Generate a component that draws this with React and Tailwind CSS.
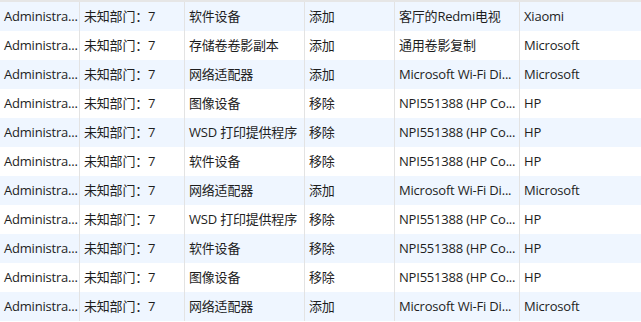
import React from 'react';

const rows = [
  ['Administra...', '未知部门：7', '软件设备', '添加', '客厅的Redmi电视', 'Xiaomi'],
  ['Administra...', '未知部门：7', '存储卷卷影副本', '添加', '通用卷影复制', 'Microsoft'],
  ['Administra...', '未知部门：7', '网络适配器', '添加', 'Microsoft Wi-Fi Di...', 'Microsoft'],
  ['Administra...', '未知部门：7', '图像设备', '移除', 'NPI551388 (HP Co...', 'HP'],
  ['Administra...', '未知部门：7', 'WSD 打印提供程序', '移除', 'NPI551388 (HP Co...', 'HP'],
  ['Administra...', '未知部门：7', '软件设备', '移除', 'NPI551388 (HP Co...', 'HP'],
  ['Administra...', '未知部门：7', '网络适配器', '添加', 'Microsoft Wi-Fi Di...', 'Microsoft'],
  ['Administra...', '未知部门：7', 'WSD 打印提供程序', '移除', 'NPI551388 (HP Co...', 'HP'],
  ['Administra...', '未知部门：7', '软件设备', '移除', 'NPI551388 (HP Co...', 'HP'],
  ['Administra...', '未知部门：7', '图像设备', '移除', 'NPI551388 (HP Co...', 'HP'],
  ['Administra...', '未知部门：7', '网络适配器', '添加', 'Microsoft Wi-Fi Di...', 'Microsoft'],
];

const cols = 'grid grid-cols-[80px_105px_120px_90px_125px_1fr]';

export default function App() {
  return (
    <div
      className="w-[641px] h-[322px] overflow-hidden bg-white text-[13px] tracking-[-0.2px] text-[#1e1e1e]"
      style={{ fontFamily: '"Open Sans", "Noto Sans CJK SC", sans-serif' }}
    >
      <div className="h-[2px] bg-[#e6e6e6]" />
      {rows.map((r, i) => (
        <div key={i} className={`${cols} h-[29px] ${i % 2 === 0 ? 'bg-[#eff6ff]' : 'bg-white'}`}>
          {r.map((c, j) => (
            <div
              key={j}
              className={`flex items-center pl-[4px] whitespace-nowrap overflow-hidden ${j < 5 ? 'border-r border-[#e3e3e3]' : ''}`}
            >
              {c}
            </div>
          ))}
        </div>
      ))}
    </div>
  );
}
